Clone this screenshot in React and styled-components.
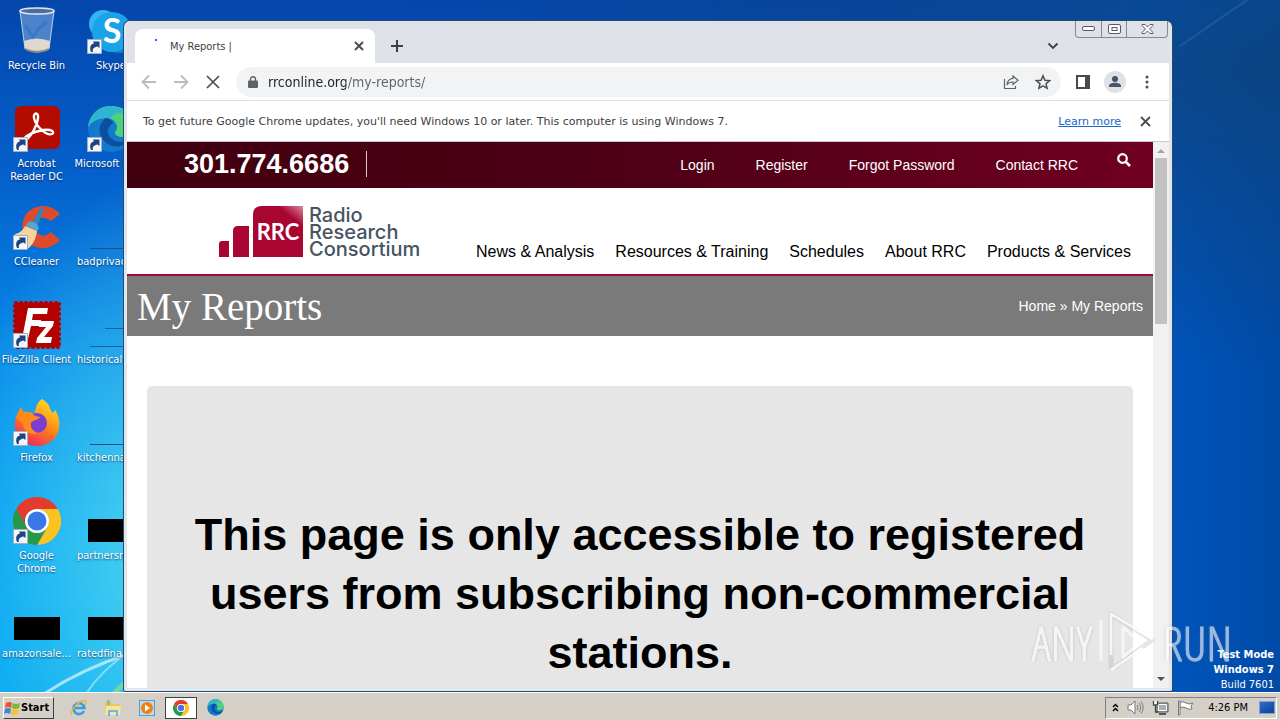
import React from 'react';
import styled, { createGlobalStyle } from 'styled-components';

const UI_FONT = "'DejaVu Sans Condensed', 'DejaVu Sans', sans-serif";
const WEB_FONT = "'Liberation Sans', Arial, sans-serif";

const SHORTCUTS = [
  { label: 'Recycle Bin', icon: 'bin' },
  { label: 'Acrobat Reader DC', icon: 'acrobat', link: true },
  { label: 'CCleaner', icon: 'ccleaner', link: true },
  { label: 'FileZilla Client', icon: 'filezilla', link: true },
  { label: 'Firefox', icon: 'firefox', link: true },
  { label: 'Google Chrome', icon: 'chrome', link: true },
  { label: 'amazonsale...', icon: 'black' },
  { label: 'Skype', icon: 'skype', link: true },
  { label: 'Microsoft Edge', icon: 'edge', link: true },
  { label: 'badprivac...', icon: 'line', long: true },
  { label: 'historicalf...', icon: 'lines', long: true },
  { label: 'kitchenna...', icon: 'line', long: true },
  { label: 'partnersm...', icon: 'black', long: true },
  { label: 'ratedfina...', icon: 'black', long: true },
];

const ACCOUNT_LINKS = ['Login', 'Register', 'Forgot Password', 'Contact RRC'];
const MAIN_LINKS = ['News & Analysis', 'Resources & Training', 'Schedules', 'About RRC', 'Products & Services'];

export default () => {
  return (
    <>
      <GlobalStyle />
      <Screen>
        <Desktop>
          <Rays />
          <Shortcuts>
            {SHORTCUTS.map((item) => <Shortcut key={item.label} item={item} />)}
          </Shortcuts>
          <BuildInfo>
            <strong>Test Mode</strong>
            <strong>Windows 7</strong>
            <span>Build 7601</span>
          </BuildInfo>
          <Browser />
          <Watermark />
        </Desktop>
        <Taskbar />
      </Screen>
    </>
  );
};

const Shortcut = ({ item }) => {
  const { label, icon, link, long } = item;
  const Picture = ICONS[icon];
  return (
    <ShortcutButton>
      <ShortcutPicture>
        <Picture />
        {link && <LinkArrow />}
      </ShortcutPicture>
      <ShortcutLabel $long={long}>{label}</ShortcutLabel>
    </ShortcutButton>
  );
};

const Browser = () => {
  return (
    <Window>
      <TabStrip>
        <Tab>
          <Spinner />
          <TabTitle>My Reports |</TabTitle>
          <IconButton $size={16} aria-label="Close tab"><Cross size={10} weight={2} /></IconButton>
        </Tab>
        <NewTab aria-label="New tab">
          <svg width="12" height="12" viewBox="0 0 12 12"><path d="M6 0v12M0 6h12" stroke="#3c4043" strokeWidth="2" /></svg>
        </NewTab>
        <TabSearch aria-label="Search tabs">
          <svg width="12" height="8" viewBox="0 0 12 8"><path d="M1.500 1.500L6 6l4.500-4.500" fill="none" stroke="#3c4043" strokeWidth="1.800" /></svg>
        </TabSearch>
        <WindowButtons>
          <WindowButton $width={25} aria-label="Minimize">
            <svg width="13" height="6"><rect x=".5" y=".5" width="12" height="4" rx="1.500" fill="#fff" stroke="#555a66" /></svg>
          </WindowButton>
          <WindowButton $width={25} aria-label="Maximize">
            <svg width="13" height="10" fill="#fff" stroke="#555a66">
              <rect x=".5" y=".5" width="12" height="9" rx="1.500" />
              <rect x="4" y="3.500" width="5" height="3" />
            </svg>
          </WindowButton>
          <WindowButton $width={41} aria-label="Close">
            <svg width="13" height="10" viewBox="0 0 13 10">
              <path d="M1 .5h3l2.500 2.500L9 .5h3v1L8.500 5 12 8.500v1H9L6.500 7 4 9.500H1v-1L4.500 5 1 1.500z" fill="#fff" stroke="#555a66" />
            </svg>
          </WindowButton>
        </WindowButtons>
      </TabStrip>
      <Toolbar>
        <IconButton $size={32} aria-label="Back"><Arrow /></IconButton>
        <IconButton $size={32} aria-label="Forward"><Arrow flip /></IconButton>
        <IconButton $size={32} aria-label="Stop"><Cross size={14} weight={1.700} /></IconButton>
        <AddressBar>
          <svg width="10" height="12" viewBox="0 0 10 12">
            <path d="M2.500 5V3.200a2.500 2.500 0 0 1 5 0V5" fill="none" stroke="#5f6368" strokeWidth="1.400" />
            <rect y="4.500" width="10" height="7.500" rx="1" fill="#5f6368" />
          </svg>
          <AddressInput aria-label="Address" defaultValue="rrconline.org/my-reports/" />
          <IconButton $size={32} aria-label="Share">
            <svg width="16" height="16" viewBox="0 0 16 16" fill="none" stroke="#5f6368" strokeWidth="1.200">
              <path d="M1.500 5v9.500h11V12" />
              <path d="M10 2l5 4.200-5 4.200V8c-3 0-4.800.8-6 3 .2-4 2.400-6.200 6-6.600z" />
            </svg>
          </IconButton>
          <IconButton $size={32} aria-label="Bookmark">
            <svg width="16" height="16" viewBox="0 0 16 16">
              <path d="M8 1.800l1.900 4.400 4.700.4L11 9.700l1.100 4.600L8 11.900l-4.100 2.400L5 9.700 1.400 6.600l4.700-.4z" fill="none" stroke="#4a4d52" strokeWidth="1.500" />
            </svg>
          </IconButton>
        </AddressBar>
        <ToolbarEnd>
          <IconButton $size={32} aria-label="Side panel">
            <svg width="14" height="14"><path d="M1 1h12v12H1z" fill="none" stroke="#4a4a4a" strokeWidth="2" /><path d="M9 0h5v14H9z" fill="#4a4a4a" /></svg>
          </IconButton>
          <IconButton $size={32} aria-label="Profile">
            <svg width="22" height="22">
              <circle cx="11" cy="11" r="11" fill="#dee1e6" />
              <circle cx="11" cy="8" r="3" fill="#46536b" />
              <path d="M5 16v-1c0-2 3-3.200 6-3.200s6 1.200 6 3.200v1z" fill="#46536b" />
            </svg>
          </IconButton>
          <IconButton $size={32} aria-label="Menu">
            <svg width="4" height="14" fill="#4a4d52"><circle cx="2" cy="2" r="1.500" /><circle cx="2" cy="7" r="1.500" /><circle cx="2" cy="12" r="1.500" /></svg>
          </IconButton>
        </ToolbarEnd>
      </Toolbar>
      <InfoBar>
        <span>To get future Google Chrome updates, you'll need Windows 10 or later. This computer is using Windows 7.</span>
        <LearnMore href="#learn">Learn more</LearnMore>
        <IconButton $size={16} aria-label="Dismiss"><Cross size={11} weight={1.800} /></IconButton>
      </InfoBar>
      <Viewport>
        <Site />
        <Scrollbar>
          <svg width="10" height="5"><path d="M1 5l4-4 4 4z" fill="#a3a3a3" /></svg>
          <ScrollThumb />
          <svg width="10" height="5"><path d="M1 0l4 4 4-4z" fill="#505050" /></svg>
        </Scrollbar>
      </Viewport>
    </Window>
  );
};

const Site = () => {
  return (
    <Page>
      <TopBar>
        <Phone>301.774.6686</Phone>
        <AccountNav>
          {ACCOUNT_LINKS.map((label) => <a key={label} href="#account">{label}</a>)}
        </AccountNav>
        <SearchButton aria-label="Search">
          <svg width="14" height="14" viewBox="0 0 14 14" fill="none" stroke="#fff">
            <circle cx="5.500" cy="5.500" r="4.300" strokeWidth="2.200" />
            <path d="M8.800 8.800l4.200 4.200" strokeWidth="2.600" />
          </svg>
        </SearchButton>
      </TopBar>
      <SiteHeader>
        <Logo href="#home">
          <svg width="84" height="51" viewBox="0 0 84 51">
            <defs>
              <linearGradient id="shine" x1="1" y1="0" x2=".6" y2=".5">
                <stop offset="0" stopColor="#d98a9d" />
                <stop offset=".5" stopColor="#a90533" />
              </linearGradient>
            </defs>
            <path d="M0 51V38q0-3 3-3h7v16zM14 51V25q0-5 5-5h11v31z" fill="#a90533" />
            <path d="M34 51V9q0-9 9-9h41v51z" fill="url(#shine)" />
            <text x="59" y="34" textAnchor="middle" fontFamily="Lato, sans-serif" fontWeight="700" fontSize="22" fill="#fff">RRC</text>
          </svg>
          <LogoName>
            <span>Radio</span>
            <span>Research</span>
            <span>Consortium</span>
          </LogoName>
        </Logo>
        <MainNav>
          {MAIN_LINKS.map((label) => <a key={label} href="#section">{label}</a>)}
        </MainNav>
      </SiteHeader>
      <TitleBar>
        <h1>My Reports</h1>
        <Crumbs><a href="#home">Home</a> » My Reports</Crumbs>
      </TitleBar>
      <Notice>This page is only accessible to registered users from subscribing non-commercial stations.</Notice>
    </Page>
  );
};

const Taskbar = () => {
  return (
    <Bar>
      <StartButton>
        <svg width="17" height="16" viewBox="0 0 17 16">
          <path d="M2 3q3-2 6 0L7 8Q4 6 1 8z" fill="#e8562a" />
          <path d="M9 3q3 2 7 0l-1 5q-4 2-7 0z" fill="#7cb83a" />
          <path d="M1 9q3-2 6 0l-1 5q-3-2-6 0z" fill="#3f86d8" />
          <path d="M8 9q3 2 7 0l-1 5q-4 2-7 0z" fill="#f6c32c" />
        </svg>
        Start
      </StartButton>
      <QuickLaunch>
        <TaskButton aria-label="Internet Explorer">
          <svg width="18" height="18" viewBox="0 0 18 18" fill="none">
            <path d="M14 12a5.500 5.500 0 1 1 .5-3H5" stroke="#3d9be0" strokeWidth="2.600" />
            <path d="M2 16C-1 13 8 2 14 1.500c3-.2 2 3 1 4.500" stroke="#e9b73a" strokeWidth="1.300" />
          </svg>
        </TaskButton>
        <TaskButton aria-label="Explorer">
          <svg width="18" height="18" viewBox="0 0 18 18">
            <path d="M1 3h6l1 2h8v10H1z" fill="#e9c75e" />
            <path d="M3 1h3v5H3z" fill="#8cc28a" />
            <path d="M2 7h15l-1 9H1z" fill="#f8e59b" />
            <path d="M4 17v-5q0-1 1-1h8q1 0 1 1v5h-2v-4H6v4z" fill="#6eb7e6" />
          </svg>
        </TaskButton>
        <TaskButton aria-label="Media Player">
          <svg width="18" height="18" viewBox="0 0 18 18">
            <rect x="1.500" y="1.500" width="15" height="15" fill="#b9dcf2" stroke="#5d9cc9" />
            <circle cx="9" cy="9" r="6" fill="#f08010" />
            <path d="M7 5.500l5 3.500-5 3.500z" fill="#fff" />
          </svg>
        </TaskButton>
        <TaskButton $active aria-label="Chrome"><ChromeMark size={16} /></TaskButton>
        <TaskButton aria-label="Edge"><EdgeMark size={17} /></TaskButton>
      </QuickLaunch>
      <Tray>
        <svg width="7" height="9" viewBox="0 0 7 9" fill="none" stroke="#000" strokeWidth="1.500"><path d="M1 4l2.500-2.500L6 4M1 8l2.500-2.500L6 8" /></svg>
        <svg width="17" height="15" viewBox="0 0 17 15" fill="none" stroke="#777">
          <path d="M1 5h3l4-4v13l-4-4H1z" fill="#fff" />
          <path d="M10 5q2 2.500 0 5M12 3q3.500 4.500 0 9M14 1.500q4.500 6 0 12" />
        </svg>
        <svg width="17" height="16" viewBox="0 0 17 16">
          <path d="M5 3h11v9H5z" fill="#a9aeb3" stroke="#555" />
          <path d="M6.500 4.500h8v6h-8z" fill="none" stroke="#fff" />
          <path d="M7 14h7" stroke="#555" strokeWidth="2" />
          <path d="M1 1h5v5H1z" fill="#fff" />
          <path d="M1.500 1v4h4V1M3.500 5v7h3" fill="none" stroke="#444" strokeWidth="1.300" />
        </svg>
        <svg width="17" height="16" viewBox="0 0 17 16" fill="#fff" stroke="#777">
          <path d="M3 2q3-1 6 1t7 0l-2 3 1 3q-3 1-6-1t-6 0z" />
          <path d="M1.500 1h1.500v14H1.500z" />
        </svg>
        <Clock>4:26 PM</Clock>
        <ShowDesktop aria-label="Show desktop" />
      </Tray>
    </Bar>
  );
};

const Arrow = ({ flip }) => (
  <svg width="16" height="16" viewBox="0 0 16 16" fill="none" stroke="#babcbe" strokeWidth="1.800">
    <path d={flip ? 'M1 8h13M8 1.500L14.500 8 8 14.500' : 'M15 8H2M8 1.500L1.500 8 8 14.500'} />
  </svg>
);

const Cross = ({ size, weight }) => (
  <svg width={size} height={size} viewBox={`0 0 ${size} ${size}`}>
    <path d={`M1 1L${size - 1} ${size - 1}M${size - 1} 1L1 ${size - 1}`} stroke="#4a4d52" strokeWidth={weight} />
  </svg>
);

const ChromeMark = ({ size = 48 }) => (
  <svg width={size} height={size} viewBox="0 0 48 48">
    <path d="M3.200 12A24 24 0 0 1 44.800 12H24A12 12 0 0 0 13.600 30z" fill="#e33b2e" />
    <path d="M44.800 12A24 24 0 0 1 24 48L34.400 30A12 12 0 0 0 24 12z" fill="#fcc31e" />
    <path d="M24 48A24 24 0 0 1 3.200 12L13.600 30A12 12 0 0 0 34.400 30z" fill="#279847" />
    <circle cx="24" cy="24" r="12" fill="#fff" />
    <circle cx="24" cy="24" r="9.500" fill="#3b78e7" />
  </svg>
);

const EdgeMark = ({ size = 48 }) => (
  <svg width={size} height={size} viewBox="0 0 48 48">
    <circle cx="24" cy="24" r="23" fill="#1279cc" />
    <path d="M1 22C3 8 13 1 24 1c14 0 23 10 23 19 0 8-5 12-11 12-5 0-8-2-8-4s2-3 2-6c0-4-4-9-11-9C10 13 4 17 1 22z" fill="#4fd07a" />
    <path d="M1 22C3 8 13 1 24 1c5 0 12 3 16 8-9-3-14 0-17 6l-4-2C10 13 4 17 1 22z" fill="#2fb5cf" />
    <path d="M19 13c-9 6-9 21 4 27 8 4 17 0 21-6-9 5-21 3-23-6-1-5 2-8 5-10-1-3-4-5-7-5z" fill="#0c4fa0" />
  </svg>
);

const RecycleBin = () => (
  <svg width="48" height="48" viewBox="0 0 48 48">
    <path d="M7 4l5 38q12 6 24 0l5-38z" fill="#7fa8dc" fillOpacity=".6" stroke="#b9cfe8" />
    <path d="M11 34q12-5 26 0l-1 8q-12 6-24 0z" fill="#ded8cf" />
    <path d="M12 41q12 6 24 0v2q-12 6-24 0z" fill="#8d8a86" />
    <path d="M12 18l8 12 6-9 8-6" fill="none" stroke="#2f6fc8" strokeWidth="3" opacity=".6" />
    <ellipse cx="24" cy="4" rx="17" ry="3" fill="#4a6f9c" stroke="#dfe8f2" strokeWidth="1.500" />
  </svg>
);

const Acrobat = () => (
  <svg width="48" height="48" viewBox="0 0 48 48">
    <rect x="2" y="1" width="45" height="43" rx="6" fill="#b30b00" />
    <path d="M11 36c-2-4 8-9 19-11 9-1 12 2 9 4-5 2-16-7-18-16-1-6 5-6 4 0-1 8-8 21-14 23z" fill="none" stroke="#fff" strokeWidth="2.400" />
  </svg>
);

const CCleaner = () => (
  <svg width="48" height="48" viewBox="0 0 48 48">
    <path d="M47 11C39 1 23 0 14 10 5 21 10 40 23 44c8 3 18 0 24-7l-9-8c-5 5-12 5-15-1-4-8 3-19 15-10z" fill="#df4a2b" />
    <path d="M28 4l3 1-7 20-6-3z" fill="#3184bd" />
    <path d="M15 19q7-3 11 6l-2 3-11-5z" fill="#56a4d2" />
    <path d="M12 23l12 5c-1 7-3 12-8 17C9 42 4 37 2 31c5-1 8-4 10-8z" fill="#f4d59c" />
  </svg>
);

const FileZilla = () => (
  <svg width="48" height="48" viewBox="0 0 48 48">
    <rect x="1.500" y="1.500" width="45" height="45" fill="#b50000" stroke="#b50000" strokeWidth="3" strokeDasharray="3 2" />
    <path d="M15 7h20l-1 6H20l-1 6h9l-1 6h-9l-3 13H9z" fill="#fff" />
    <path d="M27 20h14l-1 5-9 11h8l-1 6H23l1-5 9-11h-7z" fill="#fff" />
  </svg>
);

const Firefox = () => (
  <svg width="48" height="48" viewBox="0 0 48 48">
    <defs>
      <linearGradient id="fox" x1=".8" y1="0" x2=".3" y2="1">
        <stop offset="0" stopColor="#ffe226" />
        <stop offset=".5" stopColor="#ff8a16" />
        <stop offset="1" stopColor="#f0245c" />
      </linearGradient>
    </defs>
    <path d="M29 0c9 5 7 11 11 14l2-3c4 6 5 12 4 19-2 10-11 17-22 17C10 47 1 36 2 25c0-7 3-12 6-17l2 5c4-1 8 0 11 3 2-7 2-12 8-16z" fill="url(#fox)" />
    <circle cx="24" cy="24" r="10" fill="#7a3fd0" />
    <path d="M3 18l5-9 3 5c4-2 8-1 11 3l5 1c-1 3-8 3-9 6-1 5 2 8 7 10-9 3-15-2-15-10z" fill="#ff8a1c" />
  </svg>
);

const Skype = () => (
  <svg width="48" height="48" viewBox="0 0 48 48">
    <circle cx="16" cy="17" r="14" fill="#36b4f0" />
    <circle cx="32" cy="32" r="14" fill="#0a84d0" />
    <circle cx="25" cy="25" r="20" fill="#1aa3e8" />
    <text x="25" y="36" textAnchor="middle" fontFamily="Lato, sans-serif" fontWeight="700" fontSize="34" fill="#fff">S</text>
  </svg>
);

const BlackThumb = () => (
  <svg width="48" height="48"><rect x="1" y="22" width="46" height="23" fill="#000" /></svg>
);

const LineThumb = () => (
  <svg width="48" height="48"><path d="M3 45.500h45" stroke="#1b4f86" /></svg>
);

const LinesThumb = () => (
  <svg width="48" height="48"><path d="M18 27.500h30M3 45.500h45" stroke="#1b5f9c" /></svg>
);

const ICONS = {
  bin: RecycleBin,
  acrobat: Acrobat,
  ccleaner: CCleaner,
  filezilla: FileZilla,
  firefox: Firefox,
  chrome: ChromeMark,
  skype: Skype,
  edge: EdgeMark,
  black: BlackThumb,
  line: LineThumb,
  lines: LinesThumb,
};

const LinkArrow = () => (
  <ArrowBadge width="15" height="15" viewBox="0 0 15 15">
    <path d="M.5.500h14v14H.5z" fill="#f3f5f8" stroke="#9fb0c4" />
    <path d="M4 13C2 8 4 5 7 4.500L6 2.500h6.500v6.500L10.500 7.500C7 8 5 10 6 13z" fill="#1d4480" />
  </ArrowBadge>
);

const Rays = () => (
  <RaysLayer viewBox="0 0 1280 692" preserveAspectRatio="none" fill="none" stroke="#d8f6ff">
    <path d="M44 694Q80 670 128 654" strokeWidth="3" opacity=".7" />
    <path d="M86 694Q100 672 128 652" strokeWidth="2" opacity=".5" />
    <path d="M114 694Q120 686 128 682" stroke="#8fe08a" strokeWidth="5" opacity=".7" />
    <path d="M1180 46L1250 -2" strokeWidth="2" opacity=".1" />
  </RaysLayer>
);

const Watermark = () => (
  <WatermarkRow aria-hidden="true">
    <span>ANY</span>
    <svg width="58" height="64" viewBox="0 0 58 64" fill="none" stroke="#fff" strokeLinejoin="round">
      <path d="M13 58V3l41 26-38 28" stroke="#999" strokeWidth="5" opacity=".4" />
      <path d="M3 50V9M13 44V3l42 25M25 16v30l17-14zM13 59l32-22" strokeWidth="3" />
    </svg>
    <span>RUN</span>
  </WatermarkRow>
);

const GlobalStyle = createGlobalStyle`
  * {
    box-sizing: border-box;
  }

  body {
    margin: 0;
    font-family: ${UI_FONT};
    font-size: 11px;
  }

  button {
    margin: 0;
    padding: 0;
    border: 0;
    background: none;
    font: inherit;
    color: inherit;
  }

  a {
    color: inherit;
    text-decoration: none;
  }

  svg {
    flex-shrink: 0;
  }
`;

const Screen = styled.div`
  height: 100vh;
  display: flex;
  flex-direction: column;
  overflow: hidden;
`;

const Desktop = styled.main`
  position: relative;
  flex: 1;
  min-height: 0;
  color: #fff;
  background:
    radial-gradient(ellipse 240px 380px at 14% 80%, rgba(90, 222, 240, 0.9), transparent),
    radial-gradient(ellipse 900px 300px at 100% 10%, rgba(14, 66, 122, 0.8), transparent),
    linear-gradient(90deg, transparent 70%, rgba(0, 84, 190, 0.98) 90%, #004ba6),
    linear-gradient(#0446ac, #0560cc 25%, #058aea 52%, #02a0f4 80%, #00a4f2);
`;

const RaysLayer = styled.svg`
  position: absolute;
  inset: 0;
  width: 100%;
  height: 100%;
`;

const Shortcuts = styled.div`
  position: relative;
  display: grid;
  grid-auto-flow: column;
  grid-template: repeat(7, 98px) / 73px 76px;
  justify-content: start;
  padding-top: 7px;
`;

const ShortcutButton = styled.button`
  display: flex;
  flex-direction: column;
  align-items: center;
  justify-content: flex-start;
  gap: 4px;
`;

const ShortcutPicture = styled.span`
  position: relative;
  height: 48px;
`;

const ShortcutLabel = styled.span`
  align-self: ${(props) => (props.$long ? 'flex-start' : 'center')};
  padding-left: ${(props) => (props.$long ? '4px' : '0')};
  line-height: 13px;
  text-align: center;
  text-shadow: 0 1px 2px rgba(0, 20, 60, 0.7);
`;

const ArrowBadge = styled.svg`
  position: absolute;
  left: 0;
  bottom: 1px;
`;

const BuildInfo = styled.div`
  position: absolute;
  right: 6px;
  bottom: 0;
  display: flex;
  flex-direction: column;
  text-align: right;
  line-height: 15px;
`;

const WatermarkRow = styled.div`
  position: absolute;
  right: 48px;
  bottom: 17px;
  display: flex;
  align-items: center;
  gap: 6px;
  font: 300 48px 'Open Sans Condensed Light', 'Open Sans Condensed', 'Liberation Sans Narrow', ${WEB_FONT};
  color: #fff;
  -webkit-text-stroke: 1px #fff;
  opacity: 0.6;
  text-shadow: 0 0 3px #777;
`;

const Window = styled.section`
  position: absolute;
  inset: 21px 108px 1px 124px;
  display: flex;
  flex-direction: column;
  border: 3px solid #e1e5ec;
  border-top: 0;
  border-radius: 6px 6px 2px 2px;
  background: #fff;
  color: #3c4043;
  font-size: 11px;
  box-shadow: 0 0 0 1px #27496f;
`;

const TabStrip = styled.div`
  display: flex;
  align-items: flex-end;
  height: 42px;
  padding-left: 8px;
  background: #dee1e8;
  border-radius: 4px 4px 0 0;
`;

const Tab = styled.div`
  display: flex;
  align-items: center;
  width: 240px;
  height: 34px;
  padding: 0 8px 0 20px;
  border-radius: 8px 8px 0 0;
  background: #fff;
`;

const Spinner = styled.span`
  width: 2px;
  height: 2px;
  margin-bottom: 13px;
  background: #1a73e8;
`;

const TabTitle = styled.span`
  flex: 1;
  padding-left: 13px;
`;

const IconButton = styled.button`
  display: grid;
  place-items: center;
  flex-shrink: 0;
  width: ${(props) => props.$size}px;
  height: ${(props) => props.$size}px;
`;

const NewTab = styled(IconButton).attrs({ $size: 34 })`
  margin-left: 5px;
`;

const TabSearch = styled(IconButton).attrs({ $size: 34 })`
  margin-left: auto;
  margin-right: 5px;
`;

const WindowButtons = styled.div`
  display: flex;
  align-self: flex-start;
  margin-right: 1px;
  border: 1px solid #858b96;
  border-top: 0;
  border-radius: 0 0 4px 4px;
`;

const WindowButton = styled.button`
  display: grid;
  place-items: center;
  width: ${(props) => props.$width}px;
  height: 16px;

  & + & {
    border-left: 1px solid #858b96;
  }
`;

const Toolbar = styled.div`
  display: flex;
  align-items: center;
  height: 38px;
  padding: 0 6px;
  border-bottom: 1px solid #dcdee1;
`;

const AddressBar = styled.div`
  display: flex;
  align-items: center;
  flex: 1;
  height: 30px;
  margin-left: 7px;
  padding: 0 2px 0 12px;
  border-radius: 15px;
  background: #f1f3f4;
`;

const AddressInput = styled.input`
  flex: 1;
  min-width: 0;
  margin-left: 8px;
  padding: 0 2px;
  border: 0;
  outline: 0;
  font: 14px ${UI_FONT};
  color: transparent;
  background: linear-gradient(90deg, #202124 80px, #5f6368 80px) text;
`;

const ToolbarEnd = styled.div`
  display: flex;
  margin-left: 6px;
`;

const InfoBar = styled.div`
  display: flex;
  align-items: center;
  height: 41px;
  padding: 0 16px;
  border-bottom: 1px solid #c9c9cc;
  font-family: 'DejaVu Sans', sans-serif;
`;

const LearnMore = styled.a`
  margin: 0 16px 0 auto;
  color: #1a67c9;
  text-decoration: underline;
`;

const Viewport = styled.div`
  display: flex;
  flex: 1;
  min-height: 0;
`;

const Scrollbar = styled.div`
  display: flex;
  flex-direction: column;
  align-items: center;
  width: 16px;
  padding: 6px 0;
  background: #f1f1f1;
`;

const ScrollThumb = styled.div`
  width: 12px;
  height: 31%;
  margin: 5px 0 auto;
  background: #c1c1c1;
`;

const Page = styled.div`
  display: flex;
  flex-direction: column;
  flex: 1;
  overflow: hidden;
  font-family: ${WEB_FONT};
  color: #000;
`;

const TopBar = styled.div`
  display: flex;
  align-items: flex-start;
  flex-shrink: 0;
  height: 46px;
  padding: 0 22px 0 57px;
  background: linear-gradient(90deg, #40000f, #4e0016 50%, #700022);
  color: #fff;
`;

const Phone = styled.strong`
  margin-top: 9px;
  padding-right: 17px;
  border-right: 1px solid #d8c8cc;
  font-size: 27px;
  line-height: 26px;
`;

const AccountNav = styled.nav`
  display: flex;
  gap: 41px;
  margin-left: auto;
  font-size: 14px;
  line-height: 46px;
`;

const SearchButton = styled.button`
  margin: 11px 0 0 39px;
`;

const SiteHeader = styled.header`
  display: flex;
  justify-content: space-between;
  flex-shrink: 0;
  height: 88px;
  padding: 18px 22px 0 92px;
  border-bottom: 2px solid #a00838;
`;

const Logo = styled.a`
  display: flex;
  gap: 6px;
`;

const LogoName = styled.span`
  display: flex;
  flex-direction: column;
  padding-top: 1px;
  font: 500 20px/17px Inter, sans-serif;
  color: #47545f;
`;

const MainNav = styled.nav`
  display: flex;
  gap: 21px;
  font-size: 16px;
  line-height: 20px;
  padding-top: 36px;
  white-space: nowrap;
`;

const TitleBar = styled.div`
  display: flex;
  align-items: center;
  justify-content: space-between;
  flex-shrink: 0;
  height: 60px;
  padding: 0 10px;
  background: #7a7a7a;
  color: #fff;

  h1 {
    margin: 0;
    font: 39px 'Liberation Serif', serif;
  }
`;

const Crumbs = styled.nav`
  font-size: 14px;
`;

const Notice = styled.h2`
  flex: 1 0 auto;
  margin: 50px 20px 0;
  padding: 119px 40px;
  border-radius: 5px;
  background: #e6e6e6;
  font-size: 45px;
  line-height: 59px;
  text-align: center;
`;

const Bar = styled.footer`
  display: flex;
  align-items: center;
  height: 28px;
  padding: 2px 3px 0;
  border-top: 1px solid #fff;
  background: #d4d0c8;
`;

const StartButton = styled.button`
  display: flex;
  align-items: center;
  width: 51px;
  height: 22px;
  border: 1px solid;
  border-color: #fff #404040 #404040 #fff;
  font-weight: 700;
`;

const QuickLaunch = styled.div`
  display: flex;
  gap: 2px;
  margin-left: 9px;
`;

const TaskButton = styled.button`
  display: grid;
  place-items: center;
  width: 32px;
  height: 22px;
  border: 1px solid ${(props) => (props.$active ? '#404040' : 'transparent')};
  background: ${(props) => (props.$active ? '#fff' : 'none')};
`;

const Tray = styled.div`
  display: flex;
  align-items: center;
  gap: 8px;
  height: 22px;
  margin-left: auto;
  padding: 0 1px 0 6px;
  border: 1px solid;
  border-color: #808080 #fff #fff #808080;
`;

const Clock = styled.time`
  margin: 0 3px 0 6px;
  color: #000;
`;

const ShowDesktop = styled.button`
  width: 16px;
  height: 13px;
  border: 1px solid #7fa3cf;
  background: linear-gradient(150deg, #2b6bd0, #123f97);
`;
